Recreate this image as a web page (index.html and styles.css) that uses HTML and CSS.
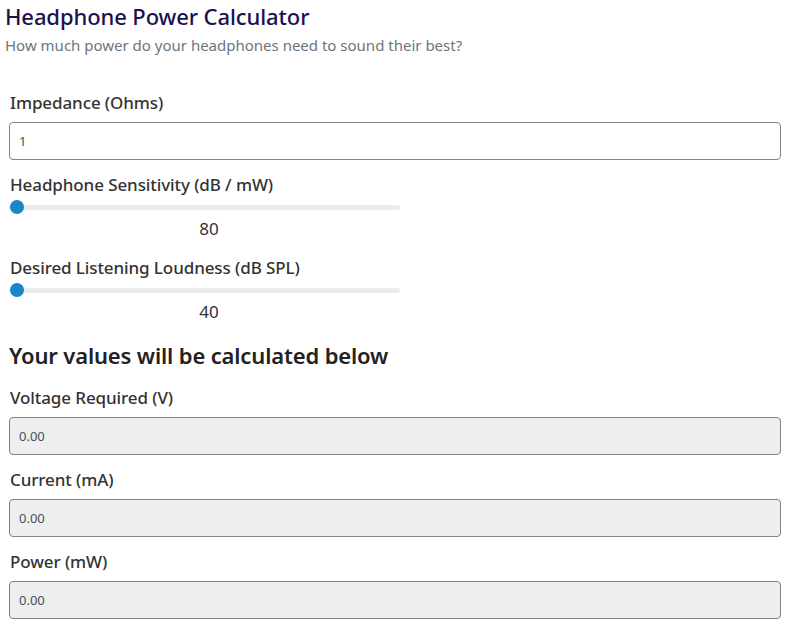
FILE: index.html
```html
<!DOCTYPE html>
<html lang="en">
<head>
<meta charset="utf-8">
<title>Headphone Power Calculator</title>
<link rel="stylesheet" href="styles.css">
</head>
<body>
<header class="header">
  <h1 class="title">Headphone Power Calculator</h1>
  <p class="subtitle">How much power do your headphones need to sound their best?</p>
</header>
<main class="form">
  <div class="field">
    <label class="label">Impedance (Ohms)</label>
    <div class="input">1</div>
  </div>
  <div class="field slider-field">
    <label class="label">Headphone Sensitivity (dB / mW)</label>
    <div class="slider"><span class="track"></span><span class="thumb"></span></div>
    <div class="value">80</div>
  </div>
  <div class="field slider-field">
    <label class="label">Desired Listening Loudness (dB SPL)</label>
    <div class="slider"><span class="track"></span><span class="thumb"></span></div>
    <div class="value">40</div>
  </div>
  <h2 class="section">Your values will be calculated below</h2>
  <div class="field">
    <label class="label">Voltage Required (V)</label>
    <div class="input readonly">0.00</div>
  </div>
  <div class="field">
    <label class="label">Current (mA)</label>
    <div class="input readonly">0.00</div>
  </div>
  <div class="field">
    <label class="label">Power (mW)</label>
    <div class="input readonly">0.00</div>
  </div>
</main>
</body>
</html>
```

FILE: styles.css
```css
* { box-sizing: border-box; }
html, body { margin: 0; padding: 0; background: #fff; }
body {
  font-family: "Noto Sans", "Open Sans", sans-serif;
  color: #333;
  width: 809px;
  height: 644px;
  overflow: hidden;
}
.header { padding: 2px 0 0 5px; }
.title {
  margin: 0;
  font-size: 22px;
  font-weight: 500;
  line-height: 28px;
  letter-spacing: -0.1px;
  color: #1b1150;
}
.subtitle {
  margin: 4px 0 0 0;
  font-size: 15px;
  line-height: 22px;
  color: #6c757d;
}
.form { padding: 35px 28px 0 9px; display: flex; flex-direction: column; }
.field { display: flex; flex-direction: column; }
.label {
  font-size: 17px;
  line-height: 24px;
  font-weight: 500;
  letter-spacing: -0.1px;
  color: #333;
  padding-left: 1px;
}
.input {
  margin-top: 7px;
  height: 38px;
  border: 1px solid #7a848e;
  border-radius: 4px;
  padding: 0 9px;
  font-size: 13px;
  line-height: 36px;
  color: #495057;
  background: #fff;
}
.input.readonly { background: #eeeeee; }
.field + .field { margin-top: 13px; }
.slider-field + .slider-field { margin-top: 16px; }
.slider {
  position: relative;
  width: 391px;
  height: 14px;
  margin-top: 3px;
  display: flex;
  align-items: center;
}
.track {
  display: block;
  width: 100%;
  height: 5px;
  background: #ececec;
  border-radius: 3px;
}
.thumb {
  position: absolute;
  left: 1px;
  top: 0;
  width: 14px;
  height: 14px;
  border-radius: 50%;
  background: #1a85c8;
}
.value {
  width: 400px;
  text-align: center;
  font-size: 17px;
  line-height: 22px;
  color: #333;
  margin-top: 4px;
}
.section {
  margin: 17px 0 16px 0;
  font-size: 22px;
  line-height: 30px;
  font-weight: 600;
  letter-spacing: -0.15px;
  color: #222;
}
.section + .field { margin-top: 0; }
```
